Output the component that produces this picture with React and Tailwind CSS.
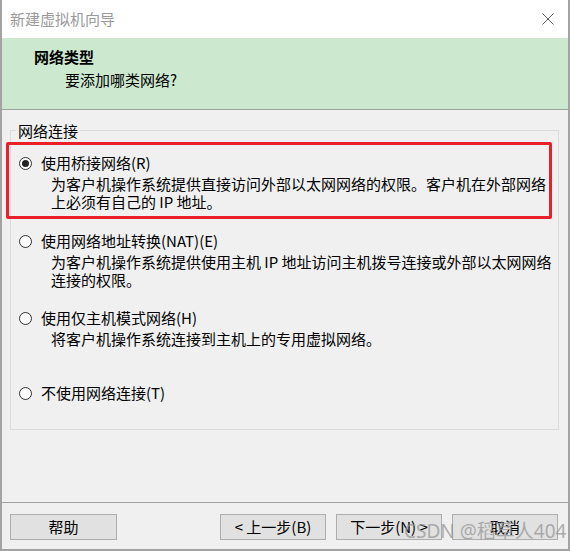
import React from 'react';

const font = { fontFamily: '"Noto Sans CJK SC", "Noto Sans", sans-serif' };

function Radio({ checked }) {
    return (
        <span className="w-[13px] h-[13px] rounded-full border border-[#333] bg-white flex items-center justify-center shrink-0">
            {checked && <span className="w-[7px] h-[7px] rounded-full bg-[#222]" />}
        </span>
    );
}

function Option({ label, checked, lines, className }) {
    return (
        <div className={className}>
            <div className="flex items-center gap-[9px] h-[20px] leading-[20px]">
                <Radio checked={checked} />
                <span>{label}</span>
            </div>
            {lines && (
                <div className="pl-[32px] mt-[2px] leading-[18px]">
                    {lines.map((l) => <div key={l} className="whitespace-nowrap">{l}</div>)}
                </div>
            )}
        </div>
    );
}

function Button({ children, className = '' }) {
    return (
        <div className={`h-[26px] bg-[#e1e1e1] border border-[#adadad] flex items-center justify-center text-[15px] ${className}`}>
            {children}
        </div>
    );
}

export default function App() {
    return (
        <div className="relative w-[570px] h-[551px] bg-[#f0f0f0] border-x-2 border-b-2 border-[#a3a3a3] flex flex-col text-[15px] text-black" style={font}>
            {/* title bar */}
            <div className="h-[38px] bg-white flex items-center justify-between pl-[8px] pr-[14px] shrink-0">
                <span className="text-[#9a9a9a] leading-[20px]">新建虚拟机向导</span>
                <svg width="12" height="12" viewBox="0 0 12 12" className="mb-[1px]">
                    <path d="M0.5 0.5 L11.5 11.5 M11.5 0.5 L0.5 11.5" stroke="#5c5c5c" strokeWidth="1" fill="none" />
                </svg>
            </div>

            {/* header */}
            <div className="h-[72px] bg-[#cce8cf] border-b border-[#a0a0a0] pl-[32px] pt-[9px] shrink-0">
                <div className="font-bold leading-[20px]">网络类型</div>
                <div className="ml-[31px] mt-[3px] leading-[20px]">要添加哪类网络?</div>
            </div>

            {/* content */}
            <div className="flex-1 pt-[20px] pl-[8px] pr-[9px]">
                <div className="relative border border-[#dcdcdc] h-[300px] pl-[8px] pt-[22px]">
                    <span className="absolute left-[5px] top-[-10px] bg-[#f0f0f0] px-[2px] leading-[20px]">网络连接</span>
                    <Option
                        checked
                        label="使用桥接网络(R)"
                        lines={['为客户机操作系统提供直接访问外部以太网网络的权限。客户机在外部网络', '上必须有自己的 IP 地址。']}
                    />
                    <Option
                        className="mt-[20px]"
                        label="使用网络地址转换(NAT)(E)"
                        lines={['为客户机操作系统提供使用主机 IP 地址访问主机拨号连接或外部以太网网络', '连接的权限。']}
                    />
                    <Option
                        className="mt-[19px]"
                        label="使用仅主机模式网络(H)"
                        lines={['将客户机操作系统连接到主机上的专用虚拟网络。']}
                    />
                    <Option className="mt-[35px]" label="不使用网络连接(T)" />
                </div>
            </div>

            {/* footer */}
            <div className="h-[47px] border-t border-[#a0a0a0] flex items-start justify-between pt-[11px] pl-[8px] pr-[10px] shrink-0">
                <Button className="w-[107px]">帮助</Button>
                <div className="flex gap-[10px]">
                    <Button className="w-[106px]">&lt; 上一步(B)</Button>
                    <Button className="w-[106px]">下一步(N) &gt;</Button>
                    <Button className="w-[106px]">取消</Button>
                </div>
            </div>

            {/* red highlight annotation */}
            <div className="absolute left-[4px] top-[142px] w-[546px] h-[77px] border-[3px] border-[#ea1f2a] rounded-[2px] pointer-events-none" />

            {/* watermark */}
            <div className="absolute left-[402px] top-[519px] text-[19px] leading-[24px] text-[rgba(150,150,150,0.75)] whitespace-nowrap pointer-events-none" style={{ fontFamily: '"Noto Sans", "Noto Sans CJK SC", sans-serif' }}>
                CSDN @稻草人404
            </div>
        </div>
    );
}
